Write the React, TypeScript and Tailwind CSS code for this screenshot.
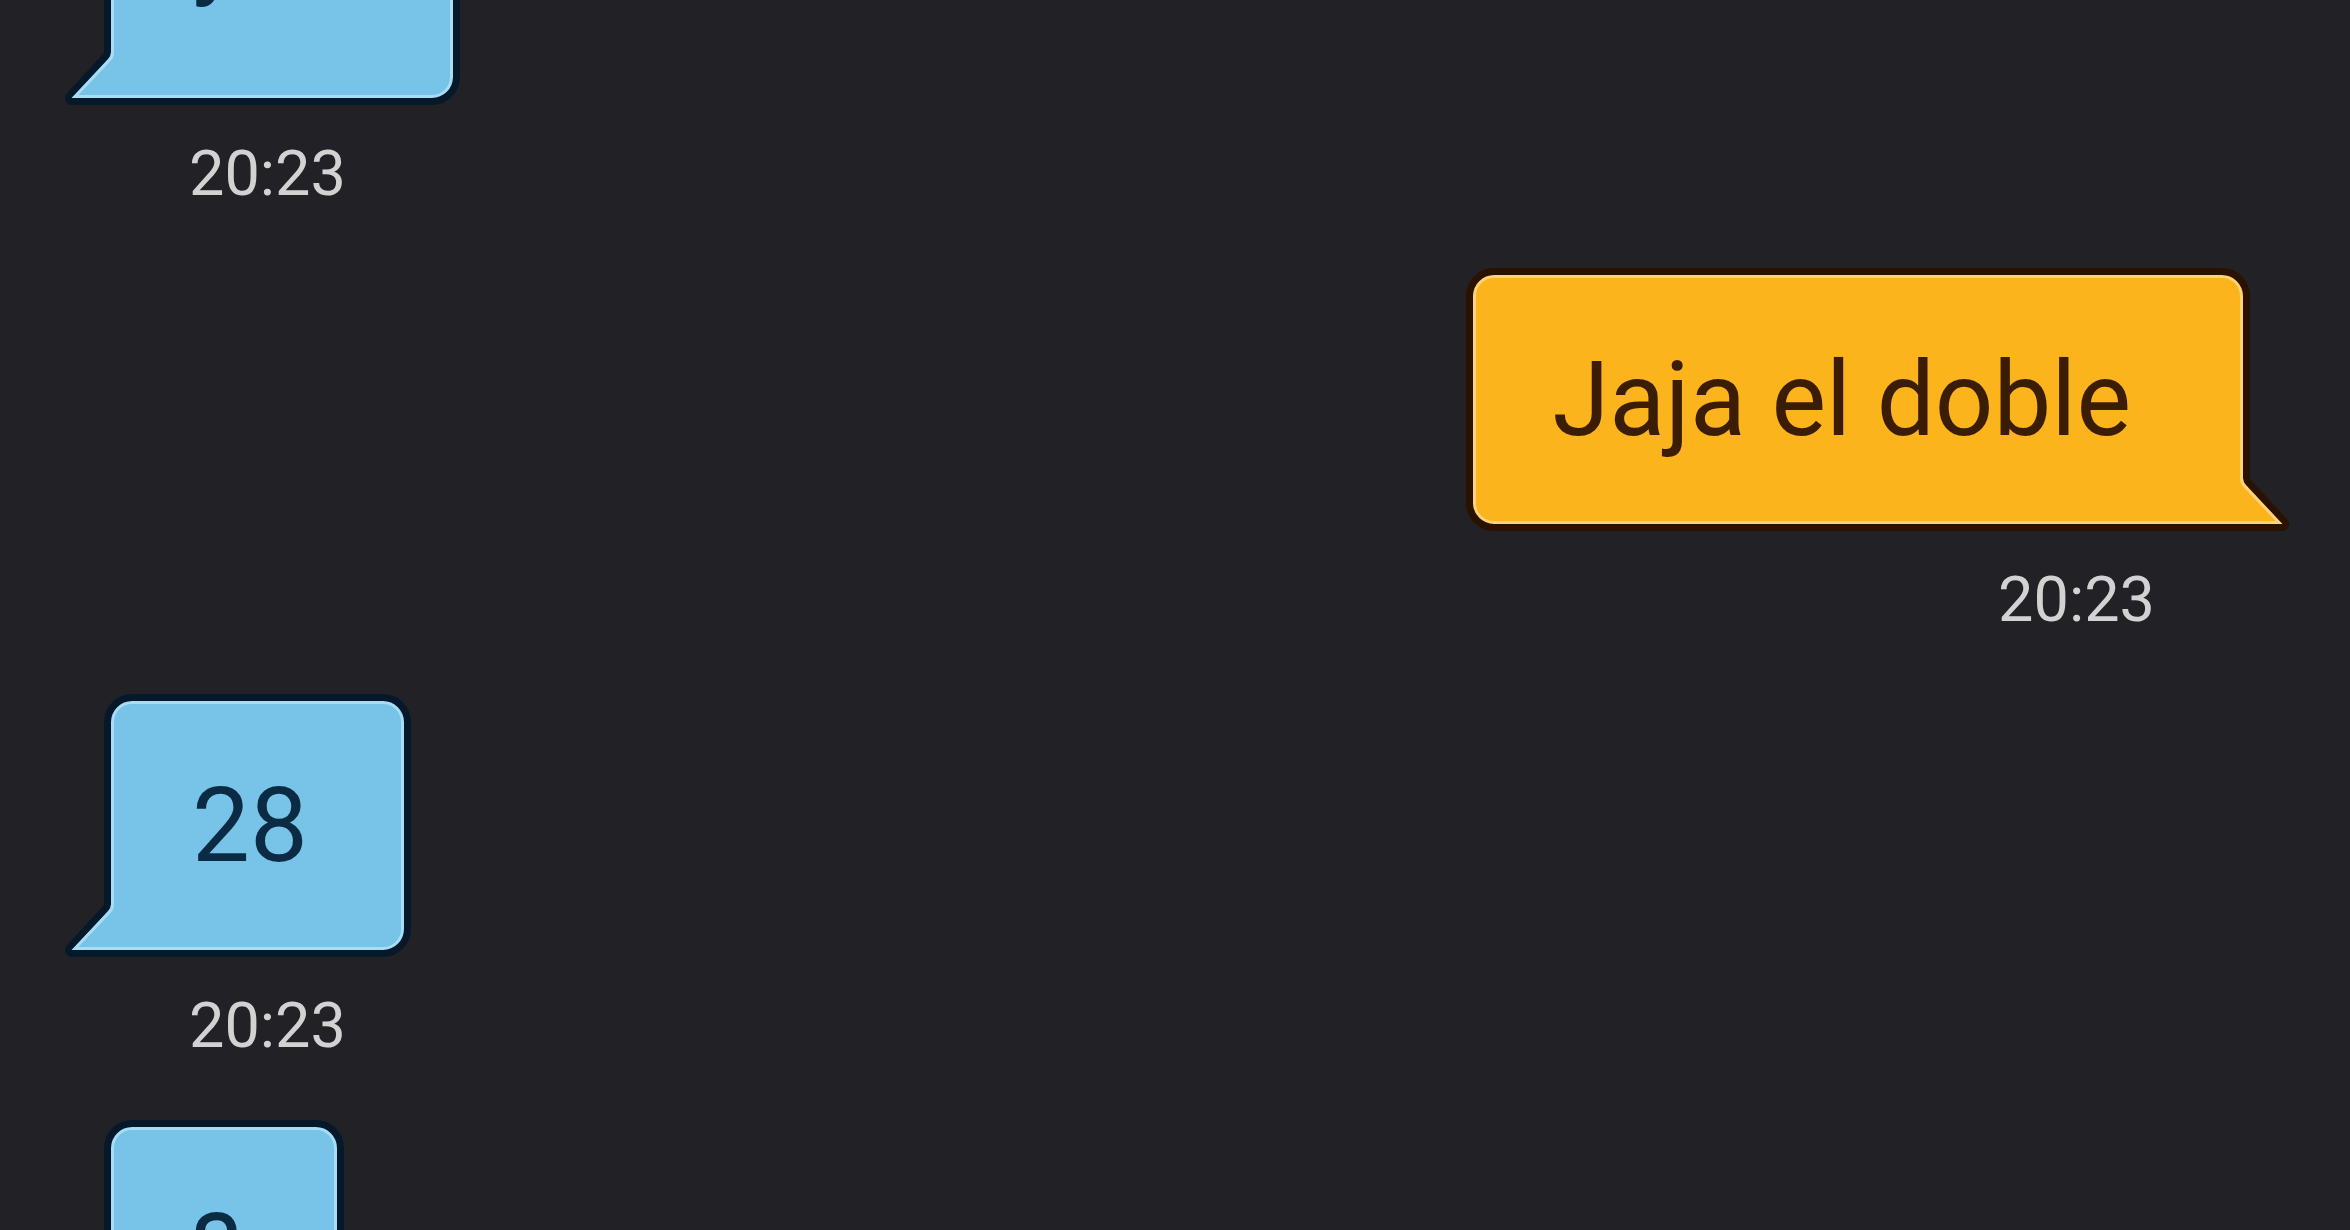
import clsx from "clsx";

type Side = "left" | "right";

interface Message {
  id: number;
  text: string;
  side: Side;
  time?: string;
}

const messages: Message[] = [
  { id: 1, text: "y tú", side: "left", time: "20:23" },
  { id: 2, text: "Jaja el doble", side: "right", time: "20:23" },
  { id: 3, text: "28", side: "left", time: "20:23" },
  { id: 4, text: "?", side: "left" },
];

const Tail = ({ side }: { side: Side }) => {
  const blue = side === "left";
  const fill = blue ? "#78c3e8" : "#fbb41c";
  const edge = blue ? "#06192a" : "#2a1200";
  const light = blue ? "#a9ddf5" : "#fcd27a";
  const d = "M47 0 L47 7 Q47 11 44 14 L8 53 L54 53 L54 0 Z";
  return (
    <svg
      width="54"
      height="60"
      viewBox="0 0 54 60"
      className={clsx(
        "absolute bottom-[-7px]",
        blue ? "left-[-47px]" : "right-[-47px] -scale-x-100"
      )}
    >
      <path d={d} fill={edge} stroke={edge} strokeWidth="14" strokeLinejoin="round" />
      <path d={d} fill={fill} />
      <path
        d="M48.5 0 L48.5 8 Q48.5 12 45.5 15 L11 51.5 L54 51.5"
        fill="none"
        stroke={light}
        strokeWidth="3"
      />
    </svg>
  );
};

const Bubble = ({ text, side, first }: { text: string; side: Side; first?: boolean }) => {
  const blue = side === "left";
  return (
    <div
      className={clsx(
        "relative flex items-center rounded-[28px] border-[7px] text-[103px] leading-none whitespace-nowrap",
        first ? "h-[287px] pb-[24px]" : "h-[263px]",
        blue
          ? "self-start rounded-bl-none border-[#06192a] bg-[#78c3e8] pl-[81px] pr-[96px] text-[#0b2a44] shadow-[inset_0_0_0_3px_#a9ddf5]"
          : "self-end rounded-br-none border-[#2a1200] bg-[#fbb41c] pl-[79px] pr-[112px] text-[#3b1d05] shadow-[inset_0_0_0_3px_#fcd27a]"
      )}
    >
      {text}
      <Tail side={side} />
    </div>
  );
};

export default function App() {
  return (
    <div className="h-[1230px] w-full overflow-hidden bg-[#222226] font-['Roboto',sans-serif]">
      <div className="-mt-[182px] flex flex-col pl-[104px] pr-[100px]">
        {messages.map((m, i) => (
          <div key={m.id} className="flex flex-col">
            <Bubble text={m.text} side={m.side} first={i === 0} />
            {m.time && (
              <p
                className={clsx(
                  "mt-[37px] mb-[63px] text-[63px] leading-none text-[#d2d2d2]",
                  m.side === "left" ? "self-start ml-[85px]" : "self-end mr-[95px]"
                )}
              >
                {m.time}
              </p>
            )}
          </div>
        ))}
      </div>
    </div>
  );
}
